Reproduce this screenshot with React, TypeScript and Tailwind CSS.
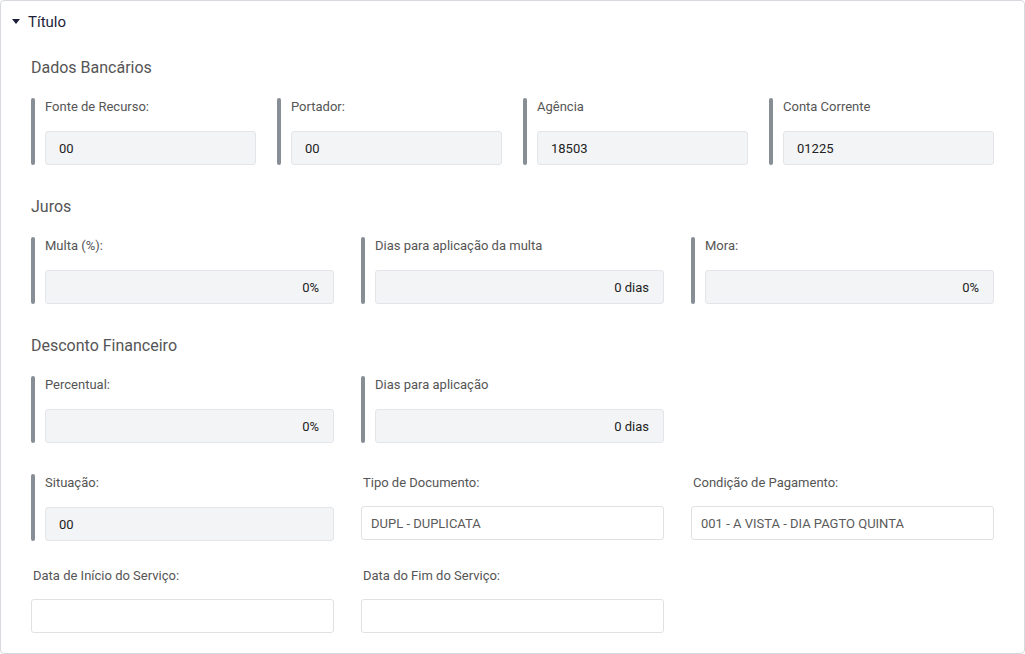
import type { ReactNode } from 'react'

interface FieldProps {
  label: string
  value?: string
  readOnly?: boolean
  align?: 'left' | 'right'
  bar?: boolean
}

function Field(props: FieldProps) {
  const { label, value = '', readOnly = false, align = 'left', bar = false } = props

  const input = readOnly ? (
    <div
      className={`h-[34px] rounded-[3px] border border-[#e3e5e9] bg-[#f3f4f6] flex items-center pt-[2px] text-[13px] text-[#222] ${
        align === 'right' ? 'justify-end pr-[14px]' : 'pl-[13px]'
      }`}
    >
      {value}
    </div>
  ) : (
    <div className="h-[34px] rounded-[3px] border border-[#dfe1e5] bg-white flex items-center pt-[1px] pl-[9px] text-[13px] text-[#5a5a5a]">
      {value}
    </div>
  )

  if (!bar) {
    return (
      <div>
        <label className="block h-[18px] leading-[18px] pl-[2px] text-[13px] text-[#555]">{label}</label>
        <div className="mt-[14px]">{input}</div>
      </div>
    )
  }

  return (
    <div className="flex">
      <div className="w-[4px] rounded-full bg-[#878e96] shrink-0" />
      <div className="flex-1 pl-[10px]">
        <label className="block h-[18px] leading-[18px] text-[13px] text-[#555]">{label}</label>
        <div className="mt-[15px]">{input}</div>
      </div>
    </div>
  )
}

function SectionTitle({ children }: { children: ReactNode }) {
  return <h3 className="text-[16px] leading-[24px] text-[#555]">{children}</h3>
}

export default function App() {
  return (
    <div className="w-[1025px] bg-white" style={{ fontFamily: 'Roboto, "Noto Sans", sans-serif' }}>
      <div className="border border-[#d6d9dd] rounded-[4px]">
        <div className="h-[42px] flex items-center pl-[11px] gap-[8px] text-[15px] text-[#1d1f3a]">
          <svg width="8" height="5" viewBox="0 0 8 5" className="mt-[-1px]">
            <path d="M0 0 L8 0 L4 5 Z" fill="#1d1f3a" />
          </svg>
          <span>Título</span>
        </div>

        <div className="px-[30px] pt-[13px] pb-[20px]">
          <SectionTitle>Dados Bancários</SectionTitle>
          <div className="mt-[18px] grid grid-cols-4 gap-x-[21px]">
            <Field bar readOnly label="Fonte de Recurso:" value="00" />
            <Field bar readOnly label="Portador:" value="00" />
            <Field bar readOnly label="Agência" value="18503" />
            <Field bar readOnly label="Conta Corrente" value="01225" />
          </div>

          <div className="mt-[30px]">
            <SectionTitle>Juros</SectionTitle>
          </div>
          <div className="mt-[18px] grid grid-cols-3 gap-x-[27px]">
            <Field bar readOnly align="right" label="Multa (%):" value="0%" />
            <Field bar readOnly align="right" label="Dias para aplicação da multa" value="0 dias" />
            <Field bar readOnly align="right" label="Mora:" value="0%" />
          </div>

          <div className="mt-[30px]">
            <SectionTitle>Desconto Financeiro</SectionTitle>
          </div>
          <div className="mt-[18px] grid grid-cols-3 gap-x-[27px]">
            <Field bar readOnly align="right" label="Percentual:" value="0%" />
            <Field bar readOnly align="right" label="Dias para aplicação" value="0 dias" />
          </div>

          <div className="mt-[31px] grid grid-cols-3 gap-x-[27px]">
            <Field bar readOnly label="Situação:" value="00" />
            <Field label="Tipo de Documento:" value="DUPL - DUPLICATA" />
            <Field label="Condição de Pagamento:" value="001 - A VISTA - DIA PAGTO QUINTA" />
          </div>

          <div className="mt-[26px] grid grid-cols-3 gap-x-[27px]">
            <Field label="Data de Início do Serviço:" />
            <Field label="Data do Fim do Serviço:" />
          </div>
        </div>
      </div>
    </div>
  )
}
